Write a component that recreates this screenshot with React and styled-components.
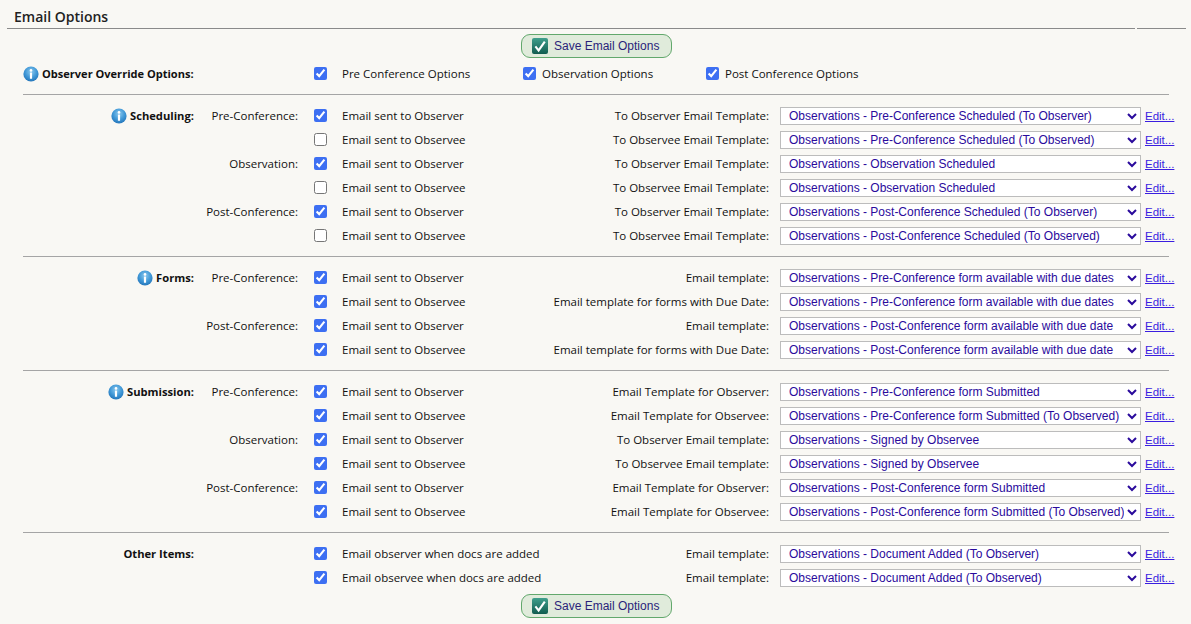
import styled, { createGlobalStyle } from 'styled-components'

const OBSERVER = 'Email sent to Observer'
const OBSERVEE = 'Email sent to Observee'
const TO_OBSERVER = 'To Observer Email Template:'
const TO_OBSERVEE = 'To Observee Email Template:'
const TEMPLATE = 'Email template:'
const DUE = 'Email template for forms with Due Date:'
const FOR_OBSERVER = 'Email Template for Observer:'
const FOR_OBSERVEE = 'Email Template for Observee:'

const sections = [
  {
    title: 'Scheduling:',
    info: true,
    rows: [
      ['Pre-Conference:', true, OBSERVER, TO_OBSERVER, 'Observations - Pre-Conference Scheduled (To Observer)'],
      ['', false, OBSERVEE, TO_OBSERVEE, 'Observations - Pre-Conference Scheduled (To Observed)'],
      ['Observation:', true, OBSERVER, TO_OBSERVER, 'Observations - Observation Scheduled'],
      ['', false, OBSERVEE, TO_OBSERVEE, 'Observations - Observation Scheduled'],
      ['Post-Conference:', true, OBSERVER, TO_OBSERVER, 'Observations - Post-Conference Scheduled (To Observer)'],
      ['', false, OBSERVEE, TO_OBSERVEE, 'Observations - Post-Conference Scheduled (To Observed)'],
    ],
  },
  {
    title: 'Forms:',
    info: true,
    rows: [
      ['Pre-Conference:', true, OBSERVER, TEMPLATE, 'Observations - Pre-Conference form available with due dates'],
      ['', true, OBSERVEE, DUE, 'Observations - Pre-Conference form available with due dates'],
      ['Post-Conference:', true, OBSERVER, TEMPLATE, 'Observations - Post-Conference form available with due date'],
      ['', true, OBSERVEE, DUE, 'Observations - Post-Conference form available with due date'],
    ],
  },
  {
    title: 'Submission:',
    info: true,
    rows: [
      ['Pre-Conference:', true, OBSERVER, FOR_OBSERVER, 'Observations - Pre-Conference form Submitted'],
      ['', true, OBSERVEE, FOR_OBSERVEE, 'Observations - Pre-Conference form Submitted (To Observed)'],
      ['Observation:', true, OBSERVER, 'To Observer Email template:', 'Observations - Signed by Observee'],
      ['', true, OBSERVEE, 'To Observee Email template:', 'Observations - Signed by Observee'],
      ['Post-Conference:', true, OBSERVER, FOR_OBSERVER, 'Observations - Post-Conference form Submitted'],
      ['', true, OBSERVEE, FOR_OBSERVEE, 'Observations - Post-Conference form Submitted (To Observed)'],
    ],
  },
  {
    title: 'Other Items:',
    last: true,
    rows: [
      ['', true, 'Email observer when docs are added', TEMPLATE, 'Observations - Document Added (To Observer)'],
      ['', true, 'Email observee when docs are added', TEMPLATE, 'Observations - Document Added (To Observed)'],
    ],
  },
]

function InfoIcon({ id }) {
  return (
    <InfoSvg viewBox="0 0 16 16">
      <defs>
        <radialGradient id={id} cx="50%" cy="35%" r="70%">
          <stop offset="0%" stopColor="#8cc9ee" />
          <stop offset="55%" stopColor="#3f97d6" />
          <stop offset="100%" stopColor="#1f6fb4" />
        </radialGradient>
      </defs>
      <circle cx="8" cy="8" r="7.6" fill={`url(#${id})`} />
      <circle cx="8" cy="4.4" r="1.3" fill="#fff" />
      <rect x="6.9" y="6.6" width="2.2" height="6.2" rx="0.4" fill="#fff" />
    </InfoSvg>
  )
}

function SaveButton({ id, gap }) {
  return (
    <SaveBar $gap={gap}>
      <GreenButton type="button">
        <svg width="16" height="16" viewBox="0 0 16 16">
          <defs>
            <linearGradient id={id} x1="0" y1="0" x2="0" y2="1">
              <stop offset="0%" stopColor="#3f9f8c" />
              <stop offset="100%" stopColor="#115c50" />
            </linearGradient>
          </defs>
          <rect width="16" height="16" rx="2" fill={`url(#${id})`} />
          <path d="M3.4 8.4 L6.6 12.4 L12.8 3.6" fill="none" stroke="#fff" strokeWidth="2.1" />
        </svg>
        Save Email Options
      </GreenButton>
    </SaveBar>
  )
}

function OptionRow({ title, info, infoId, sub, checked, label, templateLabel, template }) {
  return (
    <Row>
      <Title>
        {info && <InfoIcon id={infoId} />}
        <RaisedText>{title}</RaisedText>
      </Title>
      <SubLabel>{sub}</SubLabel>
      <CheckCell>
        <Check type="checkbox" defaultChecked={checked} />
      </CheckCell>
      <Label>{label}</Label>
      <TemplateLabel>{templateLabel}</TemplateLabel>
      <Select defaultValue={template}>
        <option>{template}</option>
      </Select>
      <EditLink href="#">Edit...</EditLink>
    </Row>
  )
}

export default function App() {
  return (
    <Page>
      <GlobalStyle />
      <Header>
        <Heading>Email Options</Heading>
        <HeaderTail />
      </Header>
      <SaveButton id="save-top" gap={5} />
      <OverrideRow>
        <OverrideTitle>
          <InfoIcon id="info-override" />
          <RaisedText>Observer Override Options:</RaisedText>
        </OverrideTitle>
        <OverrideOption $width={209}>
          <Check type="checkbox" defaultChecked />
          <OverrideFirstLabel>Pre Conference Options</OverrideFirstLabel>
        </OverrideOption>
        <OverrideOption $width={183}>
          <Check type="checkbox" defaultChecked />
          <OverrideLabel>Observation Options</OverrideLabel>
        </OverrideOption>
        <OverrideOption>
          <Check type="checkbox" defaultChecked />
          <OverrideLabel>Post Conference Options</OverrideLabel>
        </OverrideOption>
      </OverrideRow>
      {sections.map((section, s) => (
        <Section key={section.title} $last={section.last}>
          {section.rows.map((row, r) => (
            <OptionRow
              key={r}
              title={r === 0 ? section.title : ''}
              info={section.info && r === 0}
              infoId={`info-${s}`}
              sub={row[0]}
              checked={row[1]}
              label={row[2]}
              templateLabel={row[3]}
              template={row[4]}
            />
          ))}
        </Section>
      ))}
      <SaveButton id="save-bottom" gap={4} />
    </Page>
  )
}

const GlobalStyle = createGlobalStyle`
  html, body {
    margin: 0;
    padding: 0;
    background: #f9f8f4;
  }
  body {
    font-family: "Open Sans", "Liberation Sans", sans-serif;
    font-size: 11.5px;
    color: #111;
  }
`

const Page = styled.div`
  width: 1191px;
  height: 624px;
  overflow: hidden;
`

const Header = styled.div`
  display: flex;
  height: 29px;
  padding-left: 7px;
  width: 1179px;
`

const Heading = styled.h2`
  flex: 0 0 1128px;
  box-sizing: border-box;
  margin: 0;
  height: 29px;
  padding: 7px 0 0 7px;
  font-size: 14px;
  line-height: 20px;
  font-weight: 600;
  color: #222;
  border-bottom: 1px solid #8a8a8a;
`

const HeaderTail = styled.div`
  flex: 0 0 49px;
  margin-left: 2px;
  border-bottom: 1px solid #8a8a8a;
`

const SaveBar = styled.div`
  display: flex;
  justify-content: center;
  height: 24px;
  margin-top: ${(p) => p.$gap}px;
`

const GreenButton = styled.button`
  display: flex;
  align-items: center;
  gap: 6px;
  box-sizing: border-box;
  width: 151px;
  height: 24px;
  padding: 0 0 0 10px;
  margin-left: 2px;
  border: 1px solid #62a86c;
  border-radius: 9px;
  background: #e0ebdb;
  font-family: "Liberation Sans", Arial, sans-serif;
  font-size: 12px;
  color: #2a1f7a;
`

const OverrideRow = styled.div`
  display: flex;
  align-items: center;
  height: 24px;
  margin: 4px 22px 0 23px;
  padding-bottom: 8px;
  border-bottom: 1px solid #a5a5a5;
`

const OverrideTitle = styled.div`
  display: flex;
  align-items: center;
  gap: 3px;
  width: 291px;
  font-size: 11.05px;
  font-weight: 700;
`

const RaisedText = styled.span`
  padding-bottom: 2px;
`

const OverrideOption = styled.label`
  display: flex;
  align-items: center;
  width: ${(p) => (p.$width ? `${p.$width}px` : 'auto')};
`

const OverrideFirstLabel = styled.span`
  margin-left: 15px;
  padding-bottom: 2px;
`

const OverrideLabel = styled.span`
  margin-left: 6px;
  padding-bottom: 2px;
`

const Section = styled.div`
  margin: 0 22px 0 23px;
  padding: 9px 0 ${(p) => (p.$last ? '0' : '8px')};
  border-bottom: ${(p) => (p.$last ? '0' : '1px solid #a5a5a5')};
`

const Row = styled.div`
  display: grid;
  grid-template-columns: 171px 104px 44px 200px 227px 372px auto;
  align-items: center;
  height: 24px;
  white-space: nowrap;
`

const Title = styled.div`
  display: flex;
  align-items: center;
  justify-content: flex-end;
  gap: 3px;
  font-size: 11.2px;
  font-weight: 700;
`

const InfoSvg = styled.svg`
  width: 16px;
  height: 16px;
  flex: none;
`

const SubLabel = styled.div`
  text-align: right;
  padding-bottom: 2px;
`

const CheckCell = styled.div`
  display: flex;
  padding-left: 16px;
`

const Check = styled.input`
  width: 13px;
  height: 13px;
  margin: 0 0 1px;
  accent-color: #3d6ff2;
`

const Label = styled.div`
  padding-bottom: 2px;
`

const TemplateLabel = styled.div`
  text-align: right;
  padding-bottom: 2px;
`

const Select = styled.select`
  box-sizing: border-box;
  width: 361px;
  height: 18px;
  margin-left: 11px;
  padding: 0 0 0 4px;
  border: 1px solid #bcbcbc;
  border-radius: 0;
  background-color: #fff;
  font-family: "Liberation Sans", Arial, sans-serif;
  font-size: 12px;
  color: #2a0a9c;
`

const EditLink = styled.a`
  margin-left: 4px;
  font-family: "Liberation Sans", Arial, sans-serif;
  font-size: 11.5px;
  color: #3a1ee0;
`
